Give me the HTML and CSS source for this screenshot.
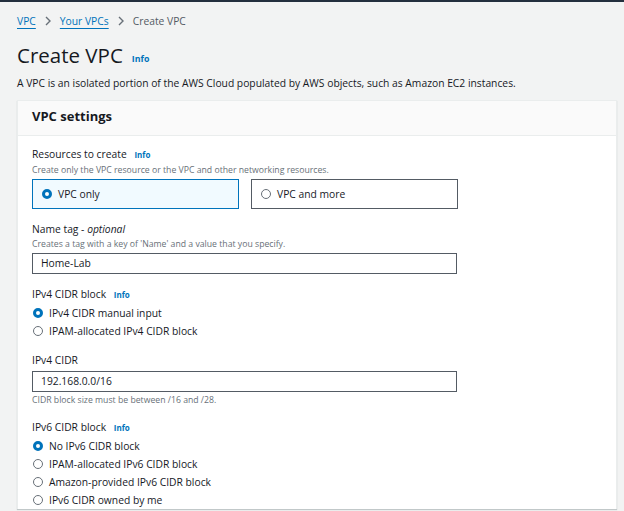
FILE: index.html
```html
<!DOCTYPE html>
<html lang="en">
<head>
<meta charset="utf-8">
<title>Create VPC</title>
<link rel="stylesheet" href="styles.css">
</head>
<body>
<div class="page">
  <nav class="crumbs">
    <a class="crumb-link">VPC</a>
    <svg class="chev" width="8" height="10" viewBox="0 0 8 10"><path d="M2 1l4 4-4 4" fill="none" stroke="#687078" stroke-width="1.4"/></svg>
    <a class="crumb-link">Your VPCs</a>
    <svg class="chev" width="8" height="10" viewBox="0 0 8 10"><path d="M2 1l4 4-4 4" fill="none" stroke="#687078" stroke-width="1.4"/></svg>
    <span class="crumb-current">Create VPC</span>
  </nav>
  <h1 class="title">Create VPC <span class="info">Info</span></h1>
  <p class="desc">A VPC is an isolated portion of the AWS Cloud populated by AWS objects, such as Amazon EC2 instances.</p>

  <section class="card">
    <div class="card-head">VPC settings</div>
    <div class="card-body">
      <div class="field">
        <div class="label">Resources to create <span class="info">Info</span></div>
        <div class="hint">Create only the VPC resource or the VPC and other networking resources.</div>
        <div class="tiles">
          <div class="tile selected"><span class="radio on"></span>VPC only</div>
          <div class="tile"><span class="radio"></span>VPC and more</div>
        </div>
      </div>

      <div class="field">
        <div class="label">Name tag - <em>optional</em></div>
        <div class="hint">Creates a tag with a key of 'Name' and a value that you specify.</div>
        <div class="input">Home-Lab</div>
      </div>

      <div class="field">
        <div class="label">IPv4 CIDR block <span class="info">Info</span></div>
        <div class="radios">
          <div class="opt"><span class="radio on"></span>IPv4 CIDR manual input</div>
          <div class="opt"><span class="radio"></span>IPAM-allocated IPv4 CIDR block</div>
        </div>
      </div>

      <div class="field">
        <div class="label">IPv4 CIDR</div>
        <div class="input mt">192.168.0.0/16</div>
        <div class="hint after">CIDR block size must be between /16 and /28.</div>
      </div>

      <div class="field">
        <div class="label">IPv6 CIDR block <span class="info">Info</span></div>
        <div class="radios">
          <div class="opt"><span class="radio on"></span>No IPv6 CIDR block</div>
          <div class="opt"><span class="radio"></span>IPAM-allocated IPv6 CIDR block</div>
          <div class="opt"><span class="radio"></span>Amazon-provided IPv6 CIDR block</div>
          <div class="opt"><span class="radio"></span>IPv6 CIDR owned by me</div>
        </div>
      </div>
    </div>
  </section>
</div>
</body>
</html>
```
FILE: styles.css
```css
html, body {
  margin: 0;
  padding: 0;
}
body {
  background: #f2f3f3;
  border-top: 2px solid #232f3e;
  font-family: "Open Sans", "Liberation Sans", sans-serif;
  color: #16191f;
  font-size: 10.3px;
  overflow: hidden;
  height: 509px;
}
.page {
  padding: 0 7px 0 17px;
}
.crumbs {
  display: flex;
  align-items: center;
  gap: 8px;
  height: 16px;
  margin-top: 11px;
  font-size: 10.3px;
  line-height: 16px;
}
.crumb-link {
  color: #0073bb;
  text-decoration: underline;
  text-underline-offset: 3px;
}
.crumb-current {
  color: #545b64;
}
.chev {
  display: block;
}
.title {
  margin: 12px 0 0;
  font-size: 20.5px;
  font-weight: 400;
  line-height: 28px;
  display: flex;
  align-items: baseline;
  gap: 9px;
}
.info {
  color: #0073bb;
  font-size: 8px;
  font-weight: 700;
  margin-left: 5px;
}
.title .info {
  margin-left: 0;
  font-size: 8.8px;
  position: relative;
  top: -1px;
}
.desc {
  margin: 1px 0 0;
  line-height: 16px;
}
.card {
  margin-top: 9px;
  background: #fff;
  border: 1px solid #eaeded;
  border-bottom: 0;
  box-shadow: 0 1px 1px rgba(0, 28, 36, 0.2);
}
.card-head {
  background: #fafafa;
  border-bottom: 1px solid #eaeded;
  height: 34px;
  padding-left: 14px;
  font-size: 13px;
  font-weight: 700;
  line-height: 30px;
}
.card-body {
  padding: 10px 14px 0;
  display: flex;
  flex-direction: column;
  gap: 12px;
}
.label {
  line-height: 16px;
}
.label em {
  font-style: italic;
}
.hint {
  font-size: 8.7px;
  color: #687078;
  line-height: 15px;
}
.hint.after {
  line-height: 14px;
  margin-top: 1px;
}
.tiles {
  display: flex;
  gap: 12px;
  margin-top: 1px;
}
.tile {
  width: 207px;
  height: 30px;
  border: 1px solid #545b64;
  display: flex;
  align-items: center;
  padding-left: 9px;
  gap: 6px;
  box-sizing: border-box;
}
.tile.selected {
  background: #f1faff;
  border-color: #0073bb;
}
.radio {
  width: 10px;
  height: 10px;
  border-radius: 50%;
  border: 1px solid #687078;
  box-sizing: border-box;
  flex: none;
  background: #fff;
}
.radio.on {
  border: 3px solid #0073bb;
}
.input {
  width: 425px;
  height: 21px;
  box-sizing: border-box;
  border: 1px solid #545b64;
  padding-left: 8px;
  line-height: 19px;
  margin-top: 1px;
}
.input.mt {
  margin-top: 3px;
}
.radios {
  display: flex;
  flex-direction: column;
  margin-top: 1px;
}
.field-tight .radios {
  margin-top: 0;
}
.opt {
  display: flex;
  align-items: center;
  gap: 6px;
  height: 18px;
  padding-left: 1px;
}
```
